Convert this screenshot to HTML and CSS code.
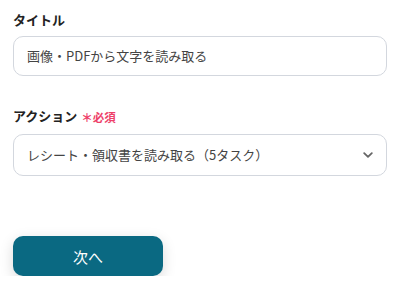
FILE: index.html
```html
<!DOCTYPE html>
<html lang="ja">
<head>
<meta charset="utf-8">
<link rel="stylesheet" href="styles.css">
</head>
<body>
<div class="form">
  <div class="field">
    <div class="label">タイトル</div>
    <div class="input">画像・PDFから文字を読み取る</div>
  </div>
  <div class="field field-action">
    <div class="label">アクション<span class="req">＊必須</span></div>
    <div class="input select">
      <span>レシート・領収書を読み取る（5タスク）</span>
      <svg class="chev" width="10" height="6" viewBox="0 0 10 6"><path d="M1.2 1.2 L5 4.8 L8.8 1.2" fill="none" stroke="#666" stroke-width="1.8" stroke-linecap="round" stroke-linejoin="round"/></svg>
    </div>
  </div>
  <div class="actions">
    <button class="next">次へ</button>
  </div>
</div>
</body>
</html>
```

FILE: styles.css
```css
html, body {
  margin: 0;
  padding: 0;
  background: #fff;
}
body {
  font-family: "Noto Sans CJK JP", "Noto Sans", sans-serif;
  color: #333;
}
.form {
  padding: 10px 14px 0 13px;
}
.label {
  font-size: 13px;
  font-weight: 700;
  line-height: 20px;
  color: #222;
  display: flex;
  align-items: flex-end;
}
.req {
  color: #ee3f6a;
  font-size: 11.5px;
  font-weight: 700;
  margin-left: 4px;
  line-height: 18px;
}
.input {
  margin-top: 6px;
  box-sizing: border-box;
  height: 40px;
  border: 1px solid #d3d7de;
  border-radius: 10px;
  padding: 0 13px;
  font-size: 13px;
  line-height: 38px;
  color: #444;
}
.field-action {
  margin-top: 30px;
}
.field-action .input {
  margin-top: 8px;
  height: 42px;
  line-height: 40px;
}
.select {
  display: flex;
  justify-content: space-between;
  align-items: center;
}
.chev {
  margin-right: 0;
}
.actions {
  margin-top: 60px;
}
.next {
  width: 150px;
  height: 40px;
  border: none;
  border-radius: 10px;
  background: #0a6982;
  color: #fff;
  font-family: inherit;
  font-size: 15px;
  box-shadow: 0 4px 14px rgba(0, 0, 0, 0.15);
}
```
